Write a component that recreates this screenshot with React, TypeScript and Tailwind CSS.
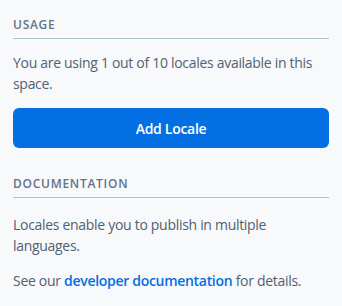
export default function App() {
  return (
    <div
      className="w-[342px] h-[306px] bg-[#f7f9fa] px-[13px] pt-[16px] text-[#536171] tracking-[-0.3px]"
      style={{ fontFamily: '"Open Sans", "Noto Sans", sans-serif' }}
    >
      <section>
        <h2 className="text-[12px] font-semibold tracking-[0.06em] text-[#67728a] uppercase leading-[18px] pb-[4px] border-b border-[#aec1cc]">
          Usage
        </h2>
        <p className="mt-[13px] text-[14px] leading-[21px]">
          You are using 1 out of 10 locales available in this space.
        </p>
        <button className="mt-[14px] w-full h-[40px] rounded-[6px] bg-[#036fe3] text-white text-[14px] font-semibold">
          Add Locale
        </button>
      </section>

      <section className="mt-[27px]">
        <h2 className="text-[12px] font-semibold tracking-[0.06em] text-[#67728a] uppercase leading-[18px] pb-[4px] border-b border-[#aec1cc]">
          Documentation
        </h2>
        <p className="mt-[16px] text-[14px] leading-[21px]">
          Locales enable you to publish in multiple languages.
        </p>
        <p className="mt-[14px] text-[14px] leading-[21px]">
          See our{" "}
          <a href="#" className="text-[#036fe3] font-semibold">
            developer documentation
          </a>{" "}
          for details.
        </p>
      </section>
    </div>
  )
}
